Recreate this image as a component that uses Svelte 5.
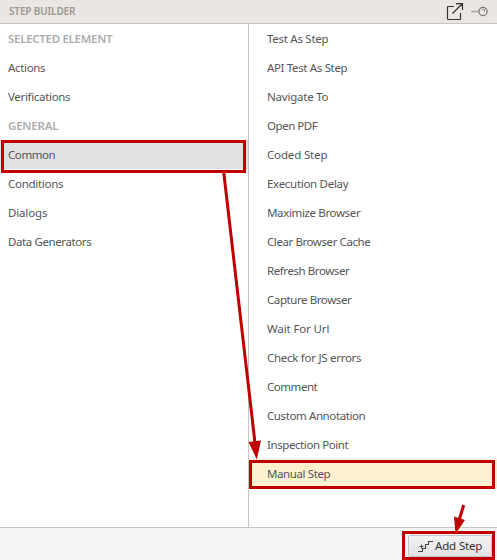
<script>
  const left = [
    { label: 'SELECTED ELEMENT', width: 104, heading: true },
    { label: 'Actions', width: 37 },
    { label: 'Verifications', width: 62 },
    { label: 'GENERAL', width: 50, heading: true },
    { label: 'Common', width: 47, selected: true },
    { label: 'Conditions', width: 55 },
    { label: 'Dialogs', width: 39 },
    { label: 'Data Generators', width: 83 }
  ];
  const right = [
    { label: 'Test As Step', width: 61 },
    { label: 'API Test As Step', width: 80 },
    { label: 'Navigate To', width: 61 },
    { label: 'Open PDF', width: 50 },
    { label: 'Coded Step', width: 60 },
    { label: 'Execution Delay', width: 81 },
    { label: 'Maximize Browser', width: 93 },
    { label: 'Clear Browser Cache', width: 103 },
    { label: 'Refresh Browser', width: 82 },
    { label: 'Capture Browser', width: 84 },
    { label: 'Wait For Url', width: 62 },
    { label: 'Check for JS errors', width: 94 },
    { label: 'Comment', width: 50 },
    { label: 'Custom Annotation', width: 98 },
    { label: 'Inspection Point', width: 81 },
    { label: 'Manual Step', width: 63, active: true }
  ];

  // Tightens or loosens tracking so a label takes its given width.
  function fit(node, width) {
    const natural = node.getBoundingClientRect().width;
    node.style.letterSpacing = `${(width + 0.3 - natural) / node.textContent.length}px`;
  }
</script>

<div class="panel">
  <header>
    <span class="title" use:fit={66}>STEP BUILDER</span>
    <svg class="open" width="18" height="18" viewBox="0 0 18 18" fill="none" stroke="#333" stroke-width="1.2">
      <path d="M8 3.5H2Q1.5 3.5 1.5 4V15.5Q1.5 16.5 2.2 16.5H14Q14.5 16.5 14.5 15.5V10M6.5 10.5L16 1M10 0.7H16.5V7" />
    </svg>
    <svg class="pin" width="18" height="12" viewBox="0 0 18 12" fill="none">
      <path d="M0 5.5H8" stroke="#aaa" stroke-width="1.6" />
      <circle cx="12" cy="5.5" r="4.1" stroke="#777" stroke-width="1.2" />
      <path d="M11 3.5H13.5V6" stroke="#999" />
    </svg>
  </header>
  <main>
    <ul class="groups">
      {#each left as item}
        <li class:heading={item.heading} class:selected={item.selected}><span use:fit={item.width}>{item.label}</span></li>
      {/each}
    </ul>
    <ul class="steps">
      {#each right as item}
        <li class:active={item.active}><span use:fit={item.width}>{item.label}</span></li>
      {/each}
    </ul>
  </main>
  <footer>
    <button>
      <svg width="17" height="13" viewBox="0 0 17 13" fill="none" stroke="#444" stroke-width="1.1">
        <path d="M1 11.5H5.5V8.5H8.5V4.5H11.5V1.5H16M2.5 6.5H6.5M4.5 4.5V8.5" />
      </svg>
      <span use:fit={47}>Add Step</span>
    </button>
  </footer>
  <svg class="marks" width="497" height="560" viewBox="0 0 497 560">
    <g fill="none" stroke="#c00000" stroke-width="3">
      <rect x="2.5" y="141.5" width="242" height="30" />
      <rect x="250.5" y="461.5" width="243" height="26" />
      <rect x="403.5" y="532.5" width="90" height="26" />
      <path d="M223.7 172L255 443M463.7 505L459.5 519" />
    </g>
    <path fill="#c00000" d="M248.5 442L261 440.5L256.8 459.5ZM454 516.5L465 520L455.5 534Z" />
  </svg>
</div>

<style>
  .panel {
    position: relative;
    display: flex;
    flex-direction: column;
    width: 497px;
    height: 560px;
    overflow: hidden;
    background: #fff;
    color: #555;
    font: 11.5px/29px "Noto Sans", "Open Sans", sans-serif;
  }
  span { white-space: pre; }
  header {
    display: flex;
    align-items: center;
    box-sizing: border-box;
    height: 24px;
    padding: 0 8px 0 9px;
    background: #e9e6e3;
    border-bottom: 1px solid #c6c6c6;
  }
  .title { margin-right: auto; color: #999; font-size: 10px; font-weight: 600; }
  .open { margin-right: 7px; }
  main { display: flex; flex: 1; min-height: 0; }
  ul { margin: 0; padding: 0; list-style: none; }
  .groups { width: 248px; border-right: 1px solid #c6c6c6; }
  .steps { flex: 1; }
  li { display: flex; height: 29px; padding-left: 8px; }
  .steps li { padding-left: 18px; }
  .heading { color: #adadad; font-weight: 600; }
  .selected { background: #e1e1e1; }
  .active { background: #fff0d0; }
  footer {
    display: flex;
    justify-content: flex-end;
    box-sizing: border-box;
    height: 33px;
    padding: 7px 5px 0 0;
    background: #f4f4f4;
    border-top: 1px solid #c6c6c6;
  }
  button {
    display: flex;
    align-items: center;
    box-sizing: border-box;
    width: 84px;
    height: 22px;
    padding: 0 0 0 8px;
    border: 1px solid #c4c4c4;
    border-radius: 2px;
    background: linear-gradient(#f2f2f2, #e4e4e4);
    color: #333;
    font: inherit;
    line-height: 20px;
  }
  button svg { margin-right: 1px; }
  .marks { position: absolute; inset: 0; pointer-events: none; }
</style>
